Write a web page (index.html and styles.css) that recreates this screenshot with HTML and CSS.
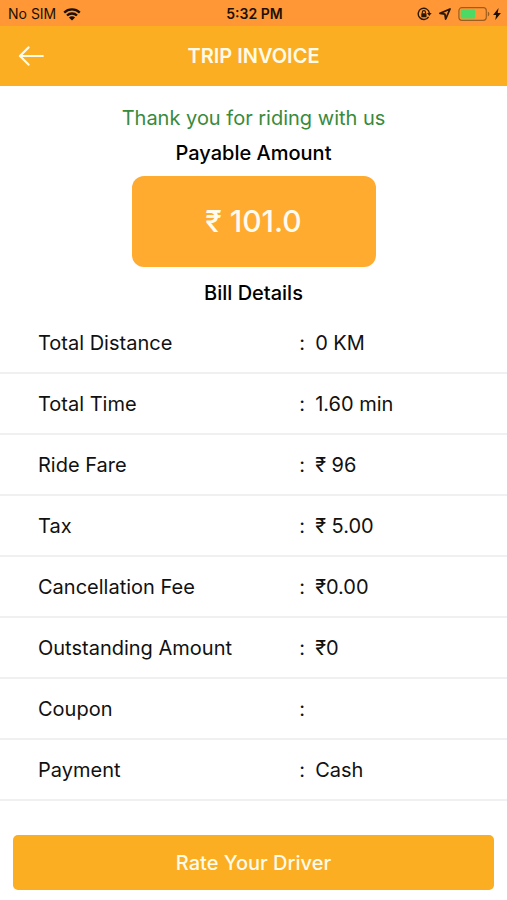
FILE: index.html
```html
<!DOCTYPE html>
<html lang="en">
<head>
<meta charset="utf-8">
<meta name="viewport" content="width=device-width, initial-scale=1">
<title>Trip Invoice</title>
<link rel="stylesheet" href="styles.css">
</head>
<body>
<div class="status">
  <div class="status-left">
    <span>No SIM</span>
    <svg width="18" height="13" viewBox="0 0 18 13" aria-hidden="true">
      <path d="M1.2 4.6a11.2 11.2 0 0 1 15.6 0M4 7.5a7.2 7.2 0 0 1 10 0" fill="none" stroke="#1c1004" stroke-width="2.3"/>
      <path d="M9 12.6 5.9 9.5a4.4 4.4 0 0 1 6.2 0z" fill="#1c1004"/>
    </svg>
  </div>
  <div class="status-time">5:32 PM</div>
  <div class="status-right">
    <svg width="15" height="14" viewBox="0 0 15 14" aria-hidden="true">
      <path d="M11.6 9.8a5.6 5.6 0 1 1 .8-3.6" fill="none" stroke="#2b1705" stroke-width="1.4"/>
      <path d="M10 6h4.6l-2.3 3z" fill="#2b1705"/>
      <rect x="4.3" y="6.3" width="5.2" height="4" rx=".6" fill="#2b1705"/>
      <path d="M5.3 6.5V5.2a1.6 1.6 0 0 1 3.2 0v1.3" fill="none" stroke="#2b1705" stroke-width="1.1"/>
    </svg>
    <svg width="12" height="12" viewBox="0 0 12 12" aria-hidden="true">
      <path d="M11 1 1 5.3l4.9.8.8 4.9z" fill="none" stroke="#2b1705" stroke-width="1.8" stroke-linejoin="round"/>
    </svg>
    <svg class="battery" width="32" height="14" viewBox="0 0 32 14" aria-hidden="true">
      <rect x=".9" y=".7" width="27.4" height="12.6" rx="3" fill="none" stroke="#9d5d1e" stroke-width="1.2"/>
      <rect x="2.7" y="2.5" width="14.3" height="9" rx="1" fill="#4cd964"/>
      <path d="M29.8 4.6a2.6 2.6 0 0 1 0 4.8z" fill="#9d5d1e"/>
    </svg>
    <svg width="8" height="12" viewBox="0 0 8 12" aria-hidden="true">
      <path d="M5.6 0 .1 6.9h3L2.3 12 7.9 4.9H4.7z" fill="#1c1004"/>
    </svg>
  </div>
</div>
<header class="bar">
  <button class="back" type="button" aria-label="Back">
    <svg width="26" height="20" viewBox="0 0 26 20" aria-hidden="true">
      <path d="M24.8 10H2.4M10.5 1.4 2 10l8.5 8.6" fill="none" stroke="#fffbe9" stroke-width="2.2" stroke-linecap="round" stroke-linejoin="round"/>
    </svg>
  </button>
  <h1>TRIP INVOICE</h1>
</header>
<main>
  <p class="thanks">Thank you for riding with us</p>
  <h2>Payable Amount</h2>
  <div class="amount">₹ 101.0</div>
  <h2 class="bill-title" id="bill">Bill Details</h2>
  <table aria-labelledby="bill">
    <tbody>
      <tr><th scope="row">Total Distance</th><td class="colon">:</td><td>0 KM</td></tr>
      <tr><th scope="row">Total Time</th><td class="colon">:</td><td>1.60 min</td></tr>
      <tr><th scope="row">Ride Fare</th><td class="colon">:</td><td>₹ 96</td></tr>
      <tr><th scope="row">Tax</th><td class="colon">:</td><td>₹ 5.00</td></tr>
      <tr><th scope="row">Cancellation Fee</th><td class="colon">:</td><td>₹0.00</td></tr>
      <tr><th scope="row">Outstanding Amount</th><td class="colon">:</td><td>₹0</td></tr>
      <tr><th scope="row">Coupon</th><td class="colon">:</td><td></td></tr>
      <tr><th scope="row">Payment</th><td class="colon">:</td><td>Cash</td></tr>
    </tbody>
  </table>
</main>
<footer>
  <button class="rate" type="button">Rate Your Driver</button>
</footer>
</body>
</html>
```
FILE: styles.css
```css
* {
  box-sizing: border-box;
}

body {
  margin: 0;
  min-height: 100vh;
  display: flex;
  flex-direction: column;
  background: #fff;
  color: #111;
  font-family: Inter, "Liberation Sans", sans-serif;
  font-size: 20px;
  line-height: 28px;
}

.status {
  display: grid;
  grid-template-columns: 1fr auto 1fr;
  align-items: center;
  height: 26px;
  padding: 2px 6px 0 8px;
  background: #ff9736;
  color: #1c1004;
  font-size: 14px;
  line-height: 24px;
}

.status-left,
.status-right {
  display: flex;
  align-items: center;
  gap: 7px;
}

.status-right {
  justify-content: flex-end;
}

.battery {
  margin-right: -4px;
}

.status-time {
  font-weight: 600;
}

.bar {
  display: grid;
  grid-template-columns: 64px 1fr 64px;
  align-items: center;
  height: 60px;
  background: #fbae22;
  color: #fffbe9;
}

.back {
  display: flex;
  align-items: center;
  height: 44px;
  padding: 0 0 0 18px;
  border: 0;
  background: none;
}

h1,
h2,
p {
  margin: 0;
  text-align: center;
}

h1 {
  font-size: 20px;
  font-weight: 600;
}

h2 {
  font-size: 20px;
  font-weight: 500;
  color: #000;
}

main {
  flex: 1;
  padding-top: 18px;
}

.thanks {
  margin-bottom: 7px;
  color: #388a3c;
}

.amount {
  width: 48%;
  min-width: 244px;
  margin: 9px auto 12px;
  padding: 28px 0;
  border-radius: 12px;
  background: #ffab30;
  color: #fffbee;
  font-size: 30px;
  font-weight: 500;
  line-height: 35px;
  text-align: center;
}

table {
  width: 100%;
  margin-top: 6px;
  border-collapse: separate;
  border-spacing: 0;
  table-layout: fixed;
}

th,
td {
  height: 61px;
  padding: 0;
  border-bottom: 2px solid #f0f0f2;
  font-weight: 400;
  text-align: left;
}

th {
  width: 59%;
  padding-left: 38px;
}

.colon {
  width: 16px;
}

footer {
  padding: 0 13px 10px;
}

.rate {
  display: block;
  width: 100%;
  height: 55px;
  border: 0;
  border-radius: 5px;
  background: #fbae22;
  color: #fffbe9;
  font: inherit;
  font-weight: 500;
}
```
